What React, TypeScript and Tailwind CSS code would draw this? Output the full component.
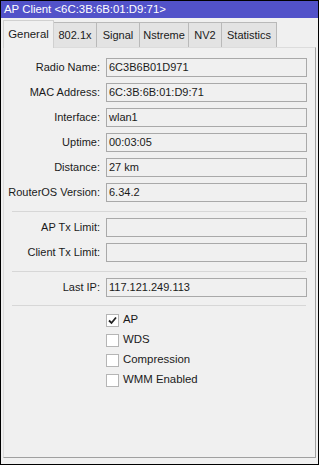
import React from 'react';

const font = { fontFamily: '"Liberation Sans", Arial, sans-serif' };

function Field({ label, value }: { label: string; value?: string }) {
  return (
    <div className="flex items-center h-[19px]">
      <div className="w-[97px] text-right pr-[1px] text-[11px] text-[#1a1a1a] leading-none whitespace-nowrap">{label}</div>
      <div className="ml-[5px] w-[201px] h-[19px] border border-[#a9a9a9] bg-[#f0f0f0] flex items-center pl-[2px] text-[11px] text-[#1a1a1a] leading-none">
        {value}
      </div>
    </div>
  );
}

function Check({ label, checked }: { label: string; checked?: boolean }) {
  return (
    <div className="flex items-center h-[20px] pl-[102px]">
      <div className="w-[13px] h-[13px] border border-[#b5b5b5] bg-white flex items-center justify-center">
        {checked && (
          <svg width="9" height="9" viewBox="0 0 9 9">
            <path d="M1 4.5 L3.5 7 L8 1.5" stroke="#222" strokeWidth="1.8" fill="none" />
          </svg>
        )}
      </div>
      <span className="ml-[4px] text-[11.4px] text-[#1a1a1a] leading-none">{label}</span>
    </div>
  );
}

const Sep = () => <div className="ml-[8px] mr-[9px] h-px bg-[#d7d7d7]" />;

export default function App() {
  const tabs = ['General', '802.1x', 'Signal', 'Nstreme', 'NV2', 'Statistics'];
  const widths = ['w-[51px]', 'w-[43px]', 'w-[43px]', 'w-[49px]', 'w-[33px]', 'w-[55px]'];
  return (
    <div className="w-[320px] h-[471px] bg-white" style={font}>
      <div className="w-[319px] h-[465px] border border-black bg-[#f0f0f0] flex flex-col">
        <div className="h-[17px] bg-[#5252c9] text-white text-[11.4px] leading-none flex items-center pl-[3px]">
          AP Client &lt;6C:3B:6B:01:D9:71&gt;
        </div>
        {/* tabs */}
        <div className="h-[29px] flex items-end pl-[2px] relative z-10">
          {tabs.map((t, i) =>
            i === 0 ? (
              <div
                key={t}
                className={`${widths[i]} h-[28px] -mb-px bg-[#f0f0f0] border border-b-0 border-[#d0d0d0] flex items-center justify-center text-[11.4px] text-[#1a1a1a]`}
              >
                {t}
              </div>
            ) : (
              <div
                key={t}
                className={`${widths[i]} h-[25px] bg-[#e3e3e3] border border-l-0 border-b-0 border-[#b9b9b9] flex items-center justify-center text-[11px] text-[#1a1a1a]`}
              >
                {t}
              </div>
            )
          )}
        </div>
        {/* panel */}
        <div className="mx-[2px] h-[411px] border border-[#dcdcdc] border-r-[#a0a0a0] border-b-[#a0a0a0] bg-[#f0f0f0] pt-[10px] flex flex-col">
          <div className="flex flex-col gap-[6px]">
            <Field label="Radio Name:" value="6C3B6B01D971" />
            <Field label="MAC Address:" value="6C:3B:6B:01:D9:71" />
            <Field label="Interface:" value="wlan1" />
            <Field label="Uptime:" value="00:03:05" />
            <Field label="Distance:" value="27 km" />
            <Field label="RouterOS Version:" value="6.34.2" />
          </div>
          <div className="mt-[9px]"><Sep /></div>
          <div className="mt-[6px] flex flex-col gap-[6px]">
            <Field label="AP Tx Limit:" />
            <Field label="Client Tx Limit:" />
          </div>
          <div className="mt-[9px]"><Sep /></div>
          <div className="mt-[6px]">
            <Field label="Last IP:" value="117.121.249.113" />
          </div>
          <div className="mt-[8px]"><Sep /></div>
          <div className="mt-[4px] flex flex-col">
            <Check label="AP" checked />
            <Check label="WDS" />
            <Check label="Compression" />
            <Check label="WMM Enabled" />
          </div>
        </div>
      </div>
    </div>
  );
}
